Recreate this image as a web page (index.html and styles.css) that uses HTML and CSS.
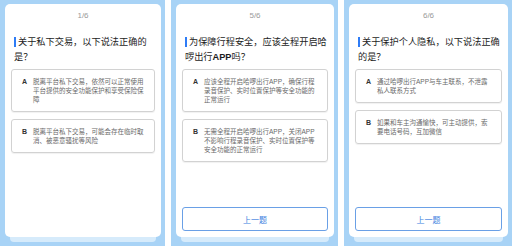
FILE: index.html
```html
<!DOCTYPE html>
<html lang="zh-CN">
<head>
<meta charset="utf-8">
<link rel="stylesheet" href="styles.css">
</head>
<body>
<div class="screens">
  <section class="panel p1">
    <div class="card">
      <div class="count">1/6</div>
      <h2 class="title"><span class="bar"></span>关于私下交易，以下说法正确的是？</h2>
      <div class="options">
        <div class="opt"><span class="letter">A</span><span class="otext">脱离平台私下交易，依然可以正常使用<br>平台提供的安全功能保护和享受保险保<br>障</span></div>
        <div class="opt"><span class="letter">B</span><span class="otext">脱离平台私下交易，可能会存在临时取<br>消、被恶意骚扰等风险</span></div>
      </div>
    </div>
    <div class="stack"></div>
  </section>
  <section class="panel p2">
    <div class="card">
      <div class="count">5/6</div>
      <h2 class="title"><span class="bar"></span>为保障行程安全，应该全程开启哈啰出行<b>APP</b>吗？</h2>
      <div class="options">
        <div class="opt"><span class="letter">A</span><span class="otext">应该全程开启哈啰出行APP，确保行程<br>录音保护、实时位置保护等安全功能的<br>正常运行</span></div>
        <div class="opt"><span class="letter">B</span><span class="otext">无需全程开启哈啰出行APP，关闭APP<br>不影响行程录音保护、实时位置保护等<br>安全功能的正常运行</span></div>
      </div>
      <button class="prev">上一题</button>
    </div>
    <div class="stack"></div>
  </section>
  <section class="panel p3">
    <div class="card">
      <div class="count">6/6</div>
      <h2 class="title"><span class="bar"></span>关于保护个人隐私，以下说法正确的是？</h2>
      <div class="options">
        <div class="opt"><span class="letter">A</span><span class="otext">通过哈啰出行APP与车主联系，不泄露<br>私人联系方式</span></div>
        <div class="opt"><span class="letter">B</span><span class="otext">如果和车主沟通愉快，可主动提供，索<br>要电话号码，互加微信</span></div>
      </div>
      <button class="prev">上一题</button>
    </div>
    <div class="stack"></div>
  </section>
</div>
</body>
</html>
```
FILE: styles.css
```css
html, body {
  margin: 0;
  padding: 0;
  background: #ffffff;
}
body {
  font-family: "Liberation Sans", "Noto Sans CJK SC", sans-serif;
  width: 515px;
  height: 250px;
  overflow: hidden;
}
.screens {
  display: grid;
  grid-template-columns: 165px 167px 168px;
  column-gap: 6px;
}
.panel {
  height: 246px;
  box-sizing: border-box;
  padding: 4px 4px 4px 5px;
  background: #a8d3f6;
  display: flex;
  flex-direction: column;
}
.card {
  flex: 1;
  background: #ffffff;
  border-radius: 5px;
  padding: 7px 6px 6px;
  display: flex;
  flex-direction: column;
  min-height: 0;
}
.stack {
  height: 5px;
  margin: 0 5px;
  background: #d6ebfb;
  border-radius: 0 0 4px 4px;
  flex: none;
}
.count {
  text-align: center;
  font-size: 8px;
  line-height: 10px;
  color: #9a9a9a;
}
.title {
  margin: 14px 0 0 3px;
  font-size: 9.2px;
  line-height: 15px;
  font-weight: normal;
  color: #1c1c1c;
}
.title b {
  font-weight: bold;
}
.bar {
  display: inline-block;
  width: 2px;
  height: 10px;
  background: #2e7cf6;
  margin-right: 2px;
  vertical-align: -1.5px;
}
.options {
  margin-top: 4px;
  display: flex;
  flex-direction: column;
  gap: 7px;
}
.opt {
  display: flex;
  align-items: flex-start;
  border: 1px solid #d2d2d2;
  border-radius: 3px;
  padding: 7px 8px 7px 10px;
  box-shadow: 0 1px 1px rgba(0,0,0,0.06);
}
.letter {
  flex: none;
  width: 5px;
  margin-right: 6px;
  font-size: 7px;
  line-height: 9px;
  font-weight: bold;
  color: #333;
}
.otext {
  font-size: 6.5px;
  line-height: 9px;
  color: #6a6a6a;
  white-space: nowrap;
}
.prev {
  margin-top: auto;
  height: 24px;
  border: 1px solid #6aa0e6;
  border-radius: 3px;
  background: #fff;
  color: #3d7fe0;
  font-family: "Noto Sans CJK SC", sans-serif;
  font-size: 8px;
  padding: 0;
}
```
